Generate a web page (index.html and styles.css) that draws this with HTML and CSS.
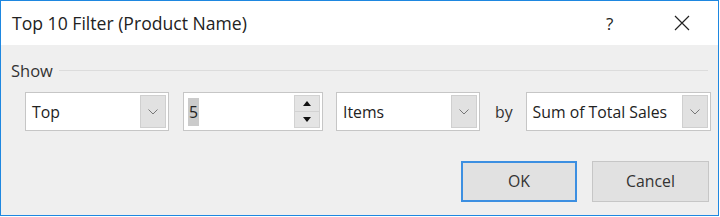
FILE: index.html
```html
<!DOCTYPE html>
<html lang="en">

<head>
    <meta charset="UTF-8">
    <title>Top 10 Filter (Product Name)</title>
    <link rel="stylesheet" href="styles.css">
</head>

<body>
    <div class="dialog">
        <div class="dialog-title">
            <h4>Top 10 Filter (Product Name)</h4>
            <span class="title-help">?</span>
            <span class="title-close">
                <svg width="16" height="16" viewBox="0 0 16 16">
                    <path d="M1 1 L15 15 M15 1 L1 15" stroke="#222" stroke-width="1.2" fill="none" />
                </svg>
            </span>
        </div>
        <div class="dialog-body">
            <div class="group-head">
                <span>Show</span>
                <div class="group-line"></div>
            </div>
            <div class="field-row">
                <div class="combo combo-top">
                    <span class="combo-text">Top</span>
                    <span class="combo-btn">
                        <svg width="10" height="6" viewBox="0 0 10 6">
                            <path d="M0.5 0.5 L5 5 L9.5 0.5" stroke="#777" stroke-width="1" fill="none" />
                        </svg>
                    </span>
                </div>
                <div class="spin">
                    <span class="spin-text"><span class="sel">5</span></span>
                    <div class="spin-btns">
                        <span class="spin-btn">
                            <svg width="8" height="5" viewBox="0 0 8 5"><path d="M0 5 L4 0 L8 5 Z" fill="#111" /></svg>
                        </span>
                        <span class="spin-btn">
                            <svg width="8" height="5" viewBox="0 0 8 5"><path d="M0 0 L4 5 L8 0 Z" fill="#111" /></svg>
                        </span>
                    </div>
                </div>
                <div class="combo combo-items">
                    <span class="combo-text">Items</span>
                    <span class="combo-btn">
                        <svg width="10" height="6" viewBox="0 0 10 6">
                            <path d="M0.5 0.5 L5 5 L9.5 0.5" stroke="#777" stroke-width="1" fill="none" />
                        </svg>
                    </span>
                </div>
                <span class="by-label">by</span>
                <div class="combo combo-sum">
                    <span class="combo-text">Sum of Total Sales</span>
                    <span class="combo-btn">
                        <svg width="10" height="6" viewBox="0 0 10 6">
                            <path d="M0.5 0.5 L5 5 L9.5 0.5" stroke="#777" stroke-width="1" fill="none" />
                        </svg>
                    </span>
                </div>
            </div>
            <div class="dialog-operate">
                <span class="btn btn-default">OK</span>
                <span class="btn">Cancel</span>
            </div>
        </div>
    </div>
</body>

</html>
```

FILE: styles.css
```css
body,
div,
h4,
span {
    padding: 0;
    margin: 0;
}

body {
    font-family: "Open Sans", "Noto Sans", sans-serif;
    color: #262626;
    background: #fff;
}

.dialog {
    width: 717px;
    height: 214px;
    border: 1px solid #1e87e0;
    display: flex;
    flex-direction: column;
}

.dialog-title {
    height: 44px;
    display: flex;
    align-items: center;
    padding-left: 11px;
    background: #fff;
}

.dialog-title h4 {
    font-weight: normal;
    font-size: 17.6px;
    flex: 1;
    color: #222;
}

.title-help {
    font-size: 17px;
    width: 20px;
    margin-right: 48px;
    color: #222;
}

.title-close {
    display: flex;
    margin-right: 28px;
}

.dialog-body {
    flex: 1;
    background: #efefef;
}

.group-head {
    display: flex;
    align-items: center;
    padding: 15px 10px 0 10px;
    height: 20px;
    font-size: 16.5px;
    color: #333;
}

.group-line {
    flex: 1;
    height: 1px;
    background: #dcdcdc;
    margin-left: 6px;
}

.field-row {
    display: flex;
    align-items: center;
    margin: 12px 0 0 24px;
}

.combo,
.spin {
    box-sizing: border-box;
    height: 39px;
    border: 1px solid #c6c6c6;
    background: #fff;
    display: flex;
    align-items: center;
    padding: 2px;
}

.combo-text {
    flex: 1;
    font-size: 15.8px;
    padding-left: 4px;
    color: #222;
}

.combo-btn {
    box-sizing: border-box;
    width: 26px;
    height: 33px;
    border: 1px solid #cfcfcf;
    background: #e1e1e1;
    display: flex;
    align-items: center;
    justify-content: center;
}

.combo-top {
    width: 144px;
}

.spin {
    width: 140px;
    margin-left: 14px;
    padding-left: 4px;
}

.spin-text {
    flex: 1;
    font-size: 15.8px;
    color: #222;
}

.spin-text .sel {
    background: #cbcbcb;
    padding: 3px 1px;
}

.spin-btns {
    display: flex;
    flex-direction: column;
    height: 33px;
}

.spin-btn {
    box-sizing: border-box;
    width: 26px;
    height: 17px;
    border: 1px solid #d2d2d2;
    background: #e4e4e4;
    display: flex;
    align-items: center;
    justify-content: center;
}

.spin-btn+.spin-btn {
    height: 16px;
    border-top: none;
}

.combo-items {
    width: 144px;
    margin-left: 13px;
}

.by-label {
    font-size: 15.8px;
    color: #333;
    margin: 0 13px 0 15px;
}

.combo-sum {
    width: 185px;
}

.dialog-operate {
    display: flex;
    justify-content: flex-end;
    margin: 30px 9px 0 0;
}

.btn {
    box-sizing: border-box;
    width: 117px;
    height: 41px;
    line-height: 39px;
    text-align: center;
    font-size: 15.8px;
    color: #333;
    background: #e1e1e1;
    border: 1px solid #c6c6c6;
    margin-left: 15px;
}

.btn-default {
    width: 116px;
    border: 2px solid #3c8fe1;
    line-height: 37px;
}
```
